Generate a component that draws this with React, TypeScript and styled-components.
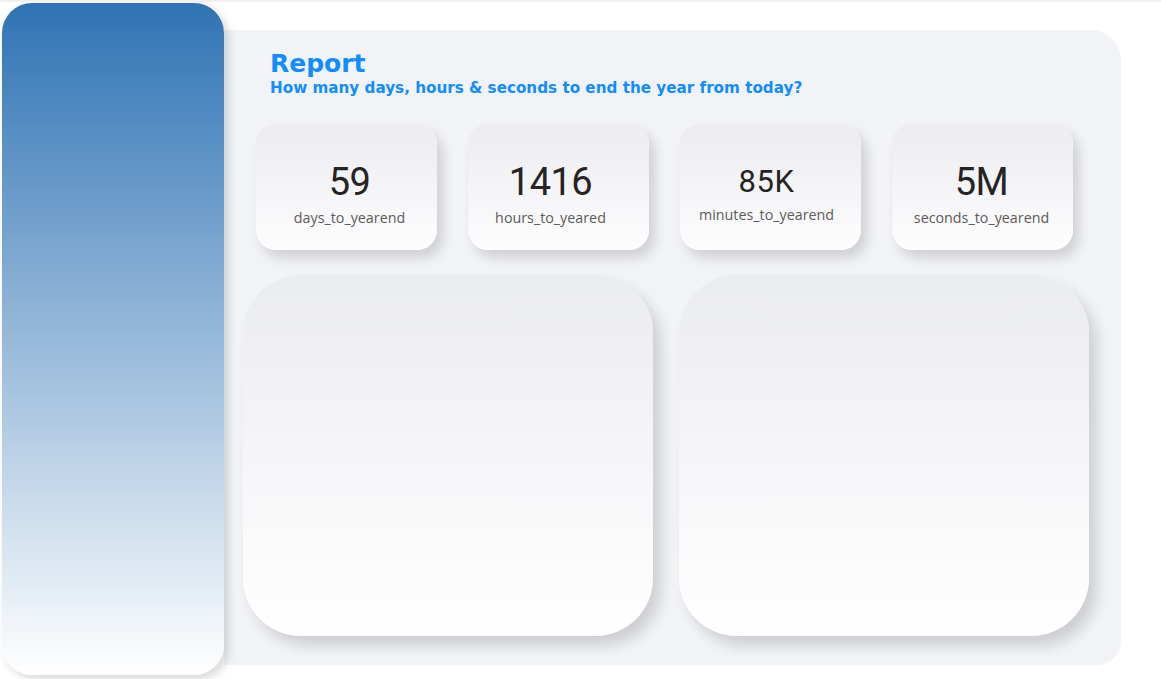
import React from "react";
import styled, { createGlobalStyle } from "styled-components";

const Global = createGlobalStyle`
  html, body { margin: 0; padding: 0; background: #ffffff; }
  body { font-family: "DejaVu Sans", sans-serif; }
`;

const Page = styled.div`
  width: 1161px;
  height: 679px;
  overflow: hidden;
  border-top: 2px solid #f1f1f3;
  box-sizing: border-box;
  display: flex;
  align-items: flex-start;
`;

const Sidebar = styled.aside`
  position: relative;
  z-index: 2;
  flex: 0 0 222px;
  height: 672px;
  margin: 1px 0 0 2px;
  border-radius: 30px;
  background: linear-gradient(180deg, #2f73b4 0%, #ffffff 100%);
  box-shadow: 4px 4px 10px rgba(0, 0, 0, 0.16);
`;

const Main = styled.main`
  flex: 0 0 897px;
  height: 635px;
  margin-top: 28px;
  background: #f2f3f7;
  border-radius: 0 30px 24px 0;
  box-sizing: border-box;
  padding: 19px 0 0 19px;
  display: flex;
  flex-direction: column;
`;

const Header = styled.header`
  padding-left: 27px;
  display: flex;
  flex-direction: column;
`;

const Title = styled.h1`
  margin: 0;
  font-family: "DejaVu Sans", sans-serif;
  font-weight: 700;
  font-size: 25px;
  line-height: 30px;
  color: #118dff;
`;

const Subtitle = styled.h2`
  margin: 0;
  font-family: "DejaVu Sans", sans-serif;
  font-weight: 700;
  font-size: 15.2px;
  line-height: 19px;
  color: #118dff;
`;

const CardRow = styled.section`
  display: flex;
  gap: 31px;
  margin: 26px 0 0 13px;
`;

const Card = styled.div<{ $shift: number }>`
  width: 181px;
  height: 126px;
  border-radius: 20px;
  background: linear-gradient(180deg, #ececf1 0%, #fdfdfe 100%);
  box-shadow: 6px 8px 12px rgba(0, 0, 0, 0.14);
  display: flex;
  flex-direction: column;
  align-items: center;
  justify-content: center;
  padding-top: 14px;
  padding-left: ${(p) => Math.max(0, p.$shift * 2)}px;
  padding-right: ${(p) => Math.max(0, -p.$shift * 2)}px;
  box-sizing: border-box;
`;

const Value = styled.div<{ $small?: boolean }>`
  font-family: "Roboto", sans-serif;
  font-size: ${(p) => (p.$small ? "31px" : "38px")};
  line-height: ${(p) => (p.$small ? "38px" : "44px")};
  letter-spacing: ${(p) => (p.$small ? "0.5px" : "-0.5px")};
  color: #252423;
`;

const Label = styled.div`
  font-family: "Open Sans", sans-serif;
  font-size: 14.3px;
  line-height: 20px;
  color: #5d5b59;
  margin-top: 4px;
`;

const PanelRow = styled.section`
  display: flex;
  gap: 26px;
  margin-top: 25px;
`;

const Panel = styled.div`
  width: 410px;
  height: 361px;
  border-radius: 58px;
  background: linear-gradient(180deg, #ebecf0 0%, #ffffff 100%);
  box-shadow: 8px 10px 14px rgba(0, 0, 0, 0.15);
`;

const cards = [
  { value: "59", label: "days_to_yearend", shift: 3 },
  { value: "1416", label: "hours_to_yeared", shift: -8 },
  { value: "85K", label: "minutes_to_yearend", small: true, shift: -4 },
  { value: "5M", label: "seconds_to_yearend", shift: -1 },
];

export default function App() {
  return (
    <>
      <Global />
      <Page>
        <Sidebar />
        <Main>
          <Header>
            <Title>Report</Title>
            <Subtitle>How many days, hours &amp; seconds to end the year from today?</Subtitle>
          </Header>
          <CardRow>
            {cards.map((c) => (
              <Card key={c.label} $shift={c.shift}>
                <Value $small={c.small}>{c.value}</Value>
                <Label>{c.label}</Label>
              </Card>
            ))}
          </CardRow>
          <PanelRow>
            <Panel />
            <Panel />
          </PanelRow>
        </Main>
      </Page>
    </>
  );
}
